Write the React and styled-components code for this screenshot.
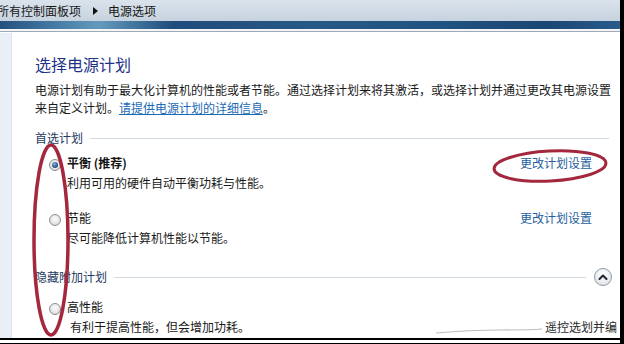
import React from "react";
import styled, { createGlobalStyle } from "styled-components";

const GlobalStyle = createGlobalStyle`
  html, body { margin: 0; padding: 0; background: #fff; }
  body { font-family: "Noto Sans CJK SC", "Noto Sans", sans-serif; }
`;

const Frame = styled.div`
  position: relative;
  width: 624px;
  height: 344px;
  overflow: hidden;
  box-sizing: border-box;
  border-right: 4px solid #000;
  display: flex;
  flex-direction: column;
  background: #fff;
`;

const TopBar = styled.div`
  height: 21px;
  flex: none;
  display: flex;
  align-items: center;
  margin-left: -3px;
  background: linear-gradient(#dae3ec, #c6d2de);
  font-size: 12px;
  color: #161616;
  white-space: nowrap;
`;

const Crumb = styled.span`
  line-height: 20px;
`;

const CrumbArrow = styled.span`
  width: 0;
  height: 0;
  margin: 0 10px 0 12px;
  border-top: 4px solid transparent;
  border-bottom: 4px solid transparent;
  border-left: 5px solid #111;
`;

const Band = styled.div`
  height: 8px;
  flex: none;
  background: linear-gradient(
    90deg,
    #24507e 0%,
    #4a80a8 10%,
    #639abb 16%,
    #1f4c7c 28%,
    #275886 50%,
    #215382 70%,
    #1b4674 88%,
    #285b8b 100%
  );
`;

const Divider = styled.div`
  height: 2px;
  flex: none;
  background: #f3f5f7;
  border-bottom: 1px solid #9ea9b5;
  margin-bottom: 1px;
`;

const Body = styled.div`
  flex: 1;
  display: flex;
  min-height: 0;
`;

const NavStrip = styled.div`
  width: 11px;
  flex: none;
  background: #e9eff6;
  border-right: 1px solid #dbe3ec;
`;

const Main = styled.div`
  flex: 1;
  min-width: 0;
  overflow: hidden;
  padding: 0 11px 0 23px;
  color: #1a1a1a;
  font-size: 12px;
`;

const Title = styled.h1`
  margin: 21px 0 0;
  font-size: 16px;
  line-height: 20px;
  font-weight: normal;
  color: #1e3287;
`;

const Intro = styled.p`
  margin: 7px 0 0;
  line-height: 18px;
  white-space: nowrap;
`;

const InlineLink = styled.a`
  color: #1b6ab5;
  text-decoration: underline;
`;

const GroupHeader = styled.div`
  margin-top: ${(p) => p.$top}px;
  height: 18px;
  display: flex;
  align-items: center;
  gap: 7px;
  color: #243a5e;
  line-height: 18px;
`;

const GroupLine = styled.div`
  flex: 1;
  height: 1px;
  background: #d2dae2;
`;

const CollapseButton = styled.div`
  width: 16px;
  height: 16px;
  margin-left: 1px;
  margin-right: -3px;
  border-radius: 50%;
  border: 1px solid #8d99a6;
  background: radial-gradient(circle at 50% 35%, #ffffff 0%, #e4e8ec 70%, #cfd5db 100%);
  display: flex;
  align-items: center;
  justify-content: center;
`;

const Plan = styled.div`
  margin-top: ${(p) => p.$top}px;
  padding-left: 14px;
  display: grid;
  grid-template-columns: 12px 1fr auto;
  column-gap: 6px;
  line-height: 20px;
`;

const Radio = styled.span`
  position: relative;
  width: 12px;
  height: 12px;
  margin-top: 6px;
  box-sizing: border-box;
  border-radius: 50%;
  border: 1px solid #8c8f92;
  background: radial-gradient(circle at 50% 40%, #fbfbfb 0%, #e6e6e6 55%, #c9cbcd 100%);

  &::after {
    content: "";
    display: ${(p) => (p.$checked ? "block" : "none")};
    position: absolute;
    left: 2px;
    top: 2px;
    width: 6px;
    height: 6px;
    border-radius: 50%;
    background: radial-gradient(circle at 40% 35%, #8fb4da 0%, #2b5c90 55%, #173a62 100%);
  }
`;

const PlanName = styled.span`
  font-weight: ${(p) => (p.$bold ? "bold" : "normal")};
  color: #111;
`;

const PlanDesc = styled.span`
  grid-column: 2;
  padding-left: ${(p) => p.$indent || 0}px;
  color: #1a1a1a;
`;

const PlanLink = styled.a`
  margin-right: 17px;
  color: #1f5f9f;
  text-decoration: none;
`;

const Footer = styled.div`
  height: 6px;
  flex: none;
  box-sizing: border-box;
  border-top: 2px solid #000;
  border-bottom: 1px solid #000;
  background: #fff;
`;

const Overlay = styled.svg`
  position: absolute;
  left: 0;
  top: 0;
  pointer-events: none;
`;

const StrayText = styled.span`
  position: absolute;
  left: 545px;
  top: 318px;
  font-size: 12px;
  line-height: 18px;
  color: #2a2a2a;
  white-space: nowrap;
`;

function ChevronUp() {
  return (
    <svg width="10" height="8" viewBox="0 0 10 8">
      <path d="M1.5 6 L5 2.5 L8.5 6" fill="none" stroke="#1d2630" strokeWidth="2" strokeLinecap="round" strokeLinejoin="round" />
    </svg>
  );
}

export default function App() {
  return (
    <>
      <GlobalStyle />
      <Frame>
        <TopBar>
          <Crumb>所有控制面板项</Crumb>
          <CrumbArrow />
          <Crumb>电源选项</Crumb>
        </TopBar>
        <Band />
        <Divider />
        <Body>
          <NavStrip />
          <Main>
            <Title>选择电源计划</Title>
            <Intro>
              电源计划有助于最大化计算机的性能或者节能。通过选择计划来将其激活，或选择计划并通过更改其电源设置
              <br />
              来自定义计划。<InlineLink>请提供电源计划的详细信息</InlineLink>。
            </Intro>

            <GroupHeader $top={12}>
              首选计划
              <GroupLine />
            </GroupHeader>

            <Plan $top={6}>
              <Radio $checked />
              <PlanName $bold>平衡 (推荐)</PlanName>
              <PlanLink>更改计划设置</PlanLink>
              <PlanDesc>利用可用的硬件自动平衡功耗与性能。</PlanDesc>
            </Plan>

            <Plan $top={15}>
              <Radio />
              <PlanName>节能</PlanName>
              <PlanLink>更改计划设置</PlanLink>
              <PlanDesc>尽可能降低计算机性能以节能。</PlanDesc>
            </Plan>

            <GroupHeader $top={20}>
              隐藏附加计划
              <GroupLine />
              <CollapseButton>
                <ChevronUp />
              </CollapseButton>
            </GroupHeader>

            <Plan $top={11}>
              <Radio />
              <PlanName>高性能</PlanName>
              <span />
              <PlanDesc $indent={3}>有利于提高性能，但会增加功耗。</PlanDesc>
            </Plan>
          </Main>
        </Body>
        <Footer />

        <StrayText>遥控选划并编</StrayText>
        <Overlay width="624" height="344" viewBox="0 0 624 344">
          <path d="M436 333 Q470 330 500 330 T542 329" fill="none" stroke="#b9bec3" strokeWidth="1.2" />
          <ellipse cx="51" cy="240" rx="17" ry="95" fill="none" stroke="#a3283d" strokeWidth="3.5" />
          <ellipse cx="550" cy="166" rx="56" ry="15" fill="none" stroke="#a3283d" strokeWidth="3" transform="rotate(-3 550 166)" />
        </Overlay>
      </Frame>
    </>
  );
}
